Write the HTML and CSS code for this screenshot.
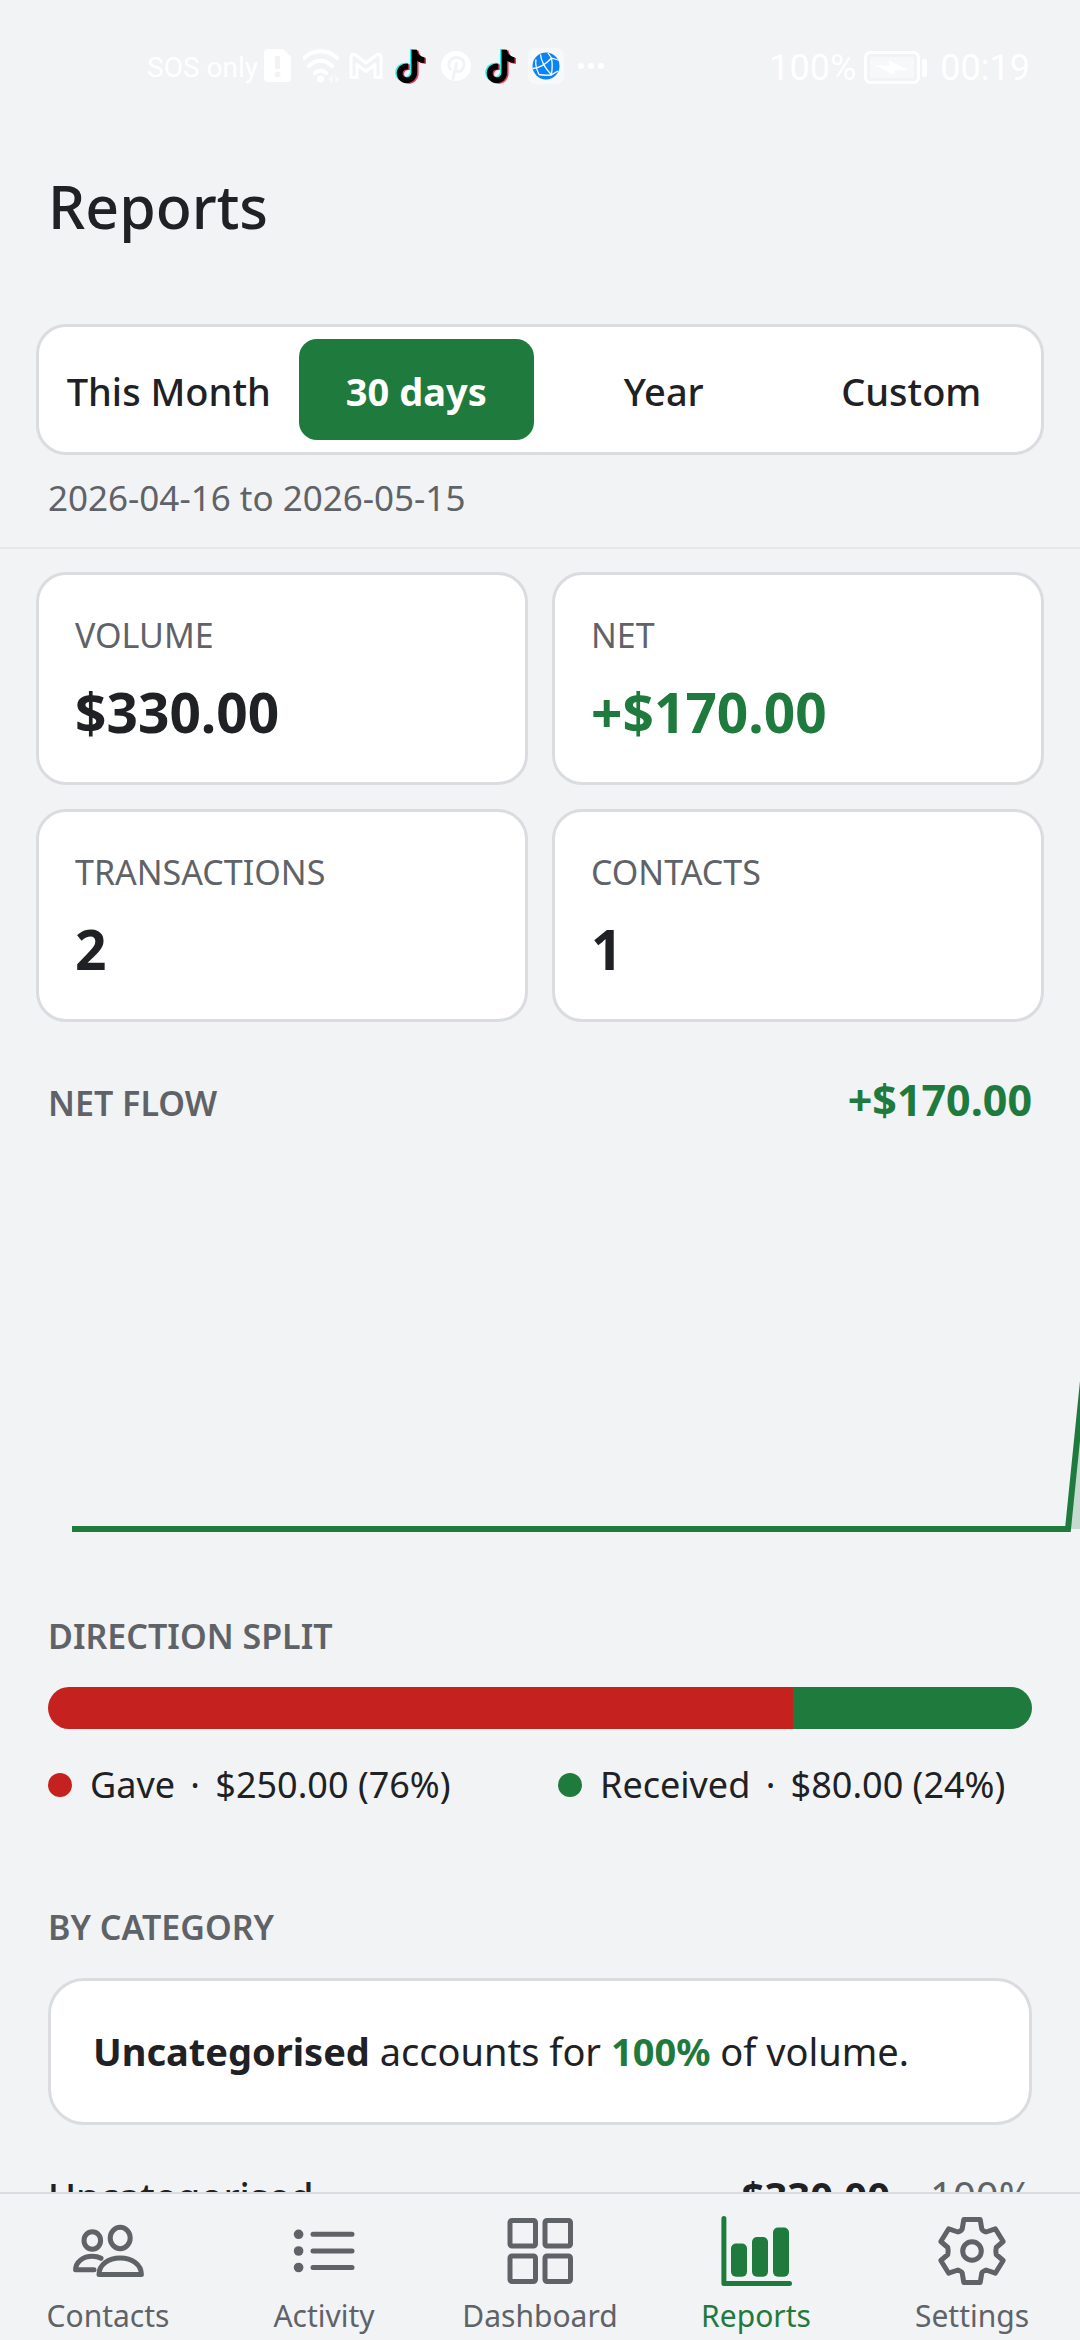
FILE: index.html
```html
<!DOCTYPE html>
<html lang="en">
<head>
<meta charset="utf-8">
<meta name="viewport" content="width=device-width, initial-scale=1">
<title>Reports</title>
<link rel="stylesheet" href="styles.css">
</head>
<body>
<svg class="defs" aria-hidden="true">
  <symbol id="note" viewBox="0 0 36 36">
    <path id="note-shape" d="M17 1h5.600c.4 4.200 3 7 7.400 7.500v5.700c-2.800 0-5.400-.9-7.400-2.300v11.800c0 6.300-4.800 10.600-10.300 10.600S2.300 30 2.300 24.600c0-6 5-10.500 11.500-9.900v6c-3.200-.6-5.700 1.200-5.700 3.800 0 2.400 1.900 4.100 4.300 4.100 2.600 0 4.600-1.700 4.600-4.800z"/>
  </symbol>
</svg>
<div class="app">
  <header class="top">
    <div class="status">
      <div class="status-left">
        <span class="carrier">SOS only</span>
        <svg class="status-icon" viewBox="0 0 36 36"><path fill="#fff" fill-rule="evenodd" d="M10 1h15l8 8v21a4 4 0 0 1-4 4H10a4 4 0 0 1-4-4V5a4 4 0 0 1 4-4zm7 7v13h5V8zm2.500 15.500a3 3 0 1 0 0 6 3 3 0 0 0 0-6z"/></svg>
        <svg class="status-icon" viewBox="0 0 36 36" fill="none" stroke="#fff" stroke-width="4" stroke-linecap="round"><path d="M1 10C10 1 25 1 34 10M6 18c7-7 16-7 23 0M12 25c4-3 8-3 11 0"/><circle cx="17.500" cy="31" r="1.500"/><path stroke-width="1" opacity=".6" d="M29 28l-3 3 3 3zM33 28l3 3-3 3z" fill="#fff"/></svg>
        <svg class="status-icon" viewBox="0 0 36 36"><path fill="none" stroke="#fff" stroke-width="3" stroke-linejoin="round" d="M3 29.500V9c0-2.500 2.500-3.500 4.500-2L18 15l10.500-8C30.500 5.500 33 6.500 33 9v20.500h-6V16.500L18 23.500l-9-7v13z"/></svg>
        <svg class="status-icon" viewBox="0 0 36 36"><use href="#note-shape" fill="#25f4ee"/><use href="#note-shape" x="3" y="1.500" fill="#fe2c55"/><use href="#note-shape" x="1.500" y=".8" fill="#000"/></svg>
        <svg class="status-icon" viewBox="0 0 36 36"><circle cx="18" cy="18" r="15" fill="#fff"/><path fill="none" stroke="#f1f3f5" stroke-width="3" stroke-linecap="round" d="M12.500 21c-4-5 0-11.500 6-11.500 5 0 8 3 7.500 7.500-.5 5-4 7-6.500 6.500-1.500-.3-2.500-1.500-2.500-1.500M18.500 15.500l-3.500 15"/></svg>
        <svg class="status-icon" viewBox="0 0 36 36"><use href="#note-shape" fill="#25f4ee"/><use href="#note-shape" x="3" y="1.500" fill="#fe2c55"/><use href="#note-shape" x="1.500" y=".8" fill="#000"/></svg>
        <svg class="status-icon" viewBox="0 0 36 36"><rect width="36" height="36" rx="7" fill="#f8f8f8"/><circle cx="18" cy="18" r="13.500" fill="#0a84f5"/><path fill="none" stroke="#fff" stroke-width="1.300" d="M12.500 6.500C13 14 17 20 23.500 27M5 20.500C11 20 18 16 23.500 10M23.500 10c1 6 1 12-.5 17.500M8 11.500c-1 5 0 9 3 15M11 26.500c4 .8 8 1 12 .5l7-4M20 5l3.500 5 6.500 2"/></svg>
        <svg class="status-icon" viewBox="0 0 36 36" fill="#fff"><circle cx="8" cy="18" r="3"/><circle cx="18" cy="18" r="3"/><circle cx="28" cy="18" r="3"/></svg>
      </div>
      <div class="status-right">
        <span>100%</span>
        <svg class="battery" viewBox="0 0 64 34"><rect x="1.500" y="1.500" width="53" height="30" rx="5" fill="none" stroke="#fff" stroke-width="3"/><rect x="6" y="6" width="44" height="21" rx="2" fill="#fff" opacity=".4"/><path fill="#fff" d="M11 14l14 1V9l19 10-14 .5V24z"/><rect x="58" y="8" width="5" height="18" rx="2" fill="#fff"/></svg>
        <span>00:19</span>
      </div>
    </div>
    <h1 class="title">Reports</h1>
    <div class="segments">
      <button class="segment" type="button">This Month</button>
      <button class="segment segment-active" type="button" aria-pressed="true">30 days</button>
      <button class="segment" type="button">Year</button>
      <button class="segment" type="button">Custom</button>
    </div>
    <p class="range">2026-04-16 to 2026-05-15</p>
  </header>

  <main class="content">
    <section class="stats">
      <div class="stat"><h2 class="stat-label">VOLUME</h2><p class="stat-value">$330.00</p></div>
      <div class="stat"><h2 class="stat-label">NET</h2><p class="stat-value positive">+$170.00</p></div>
      <div class="stat"><h2 class="stat-label">TRANSACTIONS</h2><p class="stat-value">2</p></div>
      <div class="stat"><h2 class="stat-label">CONTACTS</h2><p class="stat-value">1</p></div>
    </section>

    <section class="flow">
      <div class="flow-head">
        <h2 class="section-title">NET FLOW</h2>
        <p class="flow-total positive">+$170.00</p>
      </div>
      <svg class="chart" viewBox="0 0 1080 420" preserveAspectRatio="none" role="img" aria-label="Net flow">
        <path class="chart-area" d="M72 377H1068L1104 22V377z"/>
        <path class="chart-line" d="M72 377H1068L1104 22"/>
      </svg>
    </section>

    <section class="split">
      <h2 class="section-title">DIRECTION SPLIT</h2>
      <div class="split-bar">
        <div class="split-gave" style="width:75.76%"></div>
        <div class="split-received"></div>
      </div>
      <ul class="legend">
        <li class="legend-item"><span class="dot dot-gave"></span>Gave&thinsp; ·&thinsp; $250.00 (76%)</li>
        <li class="legend-item"><span class="dot dot-received"></span>Received&thinsp; ·&thinsp; $80.00 (24%)</li>
      </ul>
    </section>

    <section class="categories">
      <h2 class="section-title">BY CATEGORY</h2>
      <p class="insight"><b>Uncategorised</b> accounts for <b class="positive">100%</b> of volume.</p>
      <div class="category">
        <span class="category-name">Uncategorised</span>
        <b class="category-total">$330.00</b>
        <span class="category-share">100%</span>
      </div>
    </section>
  </main>

  <nav class="tabs">
    <a class="tab" href="#contacts">
      <svg class="tab-icon" viewBox="0 0 72 72"><ellipse cx="20.300" cy="25.500" rx="8.300" ry="8.700"/><ellipse cx="48.200" cy="23" rx="10" ry="10.700"/><path d="M27 59.500C27 49.500 36.500 43 48.200 43S69.400 49.500 69.400 59.500z"/><path d="M29 43.300C26.500 41.900 23.500 41.200 20.300 41.200 11 41.200 3.600 47 3.600 54.800H22"/></svg>
      Contacts
    </a>
    <a class="tab" href="#activity">
      <svg class="tab-icon" viewBox="0 0 72 72"><path d="M25 19.300H64M25 36H64M25 52.500H64"/><g class="solid"><circle cx="10.600" cy="19.300" r="4.800"/><circle cx="10.600" cy="36" r="4.800"/><circle cx="10.600" cy="52.500" r="4.800"/></g></svg>
      Activity
    </a>
    <a class="tab" href="#dashboard">
      <svg class="tab-icon" viewBox="0 0 72 72"><rect x="6" y="5.500" width="25.500" height="25.500" rx="2"/><rect x="41" y="5.500" width="25.500" height="25.500" rx="2"/><rect x="6" y="41" width="25.500" height="25.500" rx="2"/><rect x="41" y="41" width="25.500" height="25.500" rx="2"/></svg>
      Dashboard
    </a>
    <a class="tab tab-active" href="#reports" aria-current="page">
      <svg class="tab-icon" viewBox="0 0 72 72"><path d="M3.900 3.400V68.600H69.500"/><g class="solid"><rect x="11" y="28.500" width="16" height="33.200" rx="5"/><rect x="32" y="22" width="16" height="39.700" rx="5"/><rect x="53" y="12.500" width="16" height="49.200" rx="5"/></g></svg>
      Reports
    </a>
    <a class="tab" href="#settings">
      <svg class="tab-icon" viewBox="0 0 72 72"><circle cx="36" cy="36" r="9.300"/><path d="M27.800 4.500H44.200L45.800 14Q46.500 15.700 50 17L59.300 13.800 67.200 26.500 60.200 32.500Q59.500 36 60.200 39.500L67.200 45.500 59.300 58.200 50 55Q46.500 56.300 45.800 58L44.200 67.500H27.800L26.200 58Q25.500 56.300 22 55L12.700 58.200 4.800 45.500 11.800 39.500Q12.500 36 11.800 32.500L4.800 26.500 12.700 13.800 22 17Q25.500 15.700 26.200 14z"/></svg>
      Settings
    </a>
  </nav>
</div>
</body>
</html>
```

FILE: styles.css
```css
:root {
  --bg: #f1f3f5;
  --surface: #fff;
  --line: #dadce0;
  --text: #202124;
  --muted: #5f6368;
  --green: #1f7a3d;
  --red: #c5221f;
}

* { box-sizing: border-box; margin: 0; padding: 0; }

body {
  background: var(--bg);
  color: var(--text);
  font-family: "Noto Sans", Roboto, sans-serif;
}

.defs { display: none; }

.app { display: flex; flex-direction: column; height: 100vh; }

.top { border-bottom: 2px solid #e6e8ea; padding: 0 36px 24px; }

/* Status bar */
.status {
  display: flex;
  justify-content: space-between;
  align-items: center;
  height: 132px;
  padding: 0 14px 0 111px;
  color: #fff;
  font-family: Roboto, sans-serif;
}
.status-left { display: flex; align-items: center; gap: 9px; }
.carrier { width: 102px; padding-top: 2px; font-size: 28px; white-space: nowrap; }
.status-icon { width: 36px; height: 36px; }
.status-right { display: flex; align-items: center; gap: 8px; padding-top: 3px; font-size: 36px; }
.battery { width: 64px; height: 34px; margin-right: 4px; }

.title {
  padding: 0 12px;
  font-size: 59px;
  font-weight: 500;
  line-height: 84px;
  margin: 32px 0 76px;
}

.segments {
  display: grid;
  grid-template-columns: repeat(4, 1fr);
  gap: 12px;
  padding: 12px;
  background: var(--surface);
  border: 3px solid var(--line);
  border-radius: 30px;
}
.segment {
  height: 101px;
  padding-top: 3px;
  border: 0;
  border-radius: 18px;
  background: none;
  color: var(--text);
  font: 500 38px/54px "Noto Sans", Roboto, sans-serif;
  white-space: nowrap;
}
.segment-active { background: var(--green); color: #fff; font-weight: 700; }

.range { margin-top: 18px; padding: 0 12px; color: var(--muted); font-size: 35px; line-height: 50px; }

/* Scrolling body */
.content { flex: 1; min-height: 0; overflow: hidden auto; scrollbar-width: none; padding-top: 23px; }

.stats { display: grid; grid-template-columns: 1fr 1fr; gap: 24px; padding: 0 36px; }
.stat {
  padding: 36px 36px 32px;
  background: var(--surface);
  border: 3px solid var(--line);
  border-radius: 30px;
}
.stat-label { color: var(--muted); font-size: 34px; font-weight: 400; line-height: 48px; }
.stat-value { margin-top: 14px; font-size: 55px; font-weight: 700; line-height: 77px; }
.positive { color: var(--green); }

.section-title { color: var(--muted); font-size: 34px; font-weight: 600; line-height: 48px; }

.flow-head { display: flex; justify-content: space-between; align-items: baseline; padding: 48px 48px 0; }
.flow-total { font-size: 43px; font-weight: 700; line-height: 60px; }
.chart { display: block; width: 100%; height: 420px; margin-top: 22px; }
.chart-line { fill: none; stroke: var(--green); stroke-width: 6; }
.chart-area { fill: var(--green); opacity: .2; }

.split { padding: 40px 48px 0; }
.split-bar { display: flex; height: 42px; margin-top: 27px; border-radius: 21px; overflow: hidden; }
.split-gave { background: var(--red); }
.split-received { flex: 1; background: var(--green); }
.legend { display: grid; grid-template-columns: 1fr 1fr; gap: 36px; margin-top: 30px; list-style: none; }
.legend-item { display: flex; align-items: center; gap: 18px; font-size: 36px; line-height: 52px; white-space: nowrap; }
.dot { width: 24px; height: 24px; border-radius: 50%; }
.dot-gave { background: var(--red); }
.dot-received { background: var(--green); }

.categories { padding: 92px 48px 0; }
.insight {
  margin-top: 27px;
  padding: 42px;
  background: var(--surface);
  border: 3px solid var(--line);
  border-radius: 36px;
  font-size: 38px;
  line-height: 57px;
}
.category { display: flex; align-items: baseline; gap: 40px; margin-top: 42px; font-size: 40px; line-height: 57px; }
.category-name { flex: 1; font-size: 38px; font-weight: 500; }
.category-share { color: var(--muted); }

/* Bottom navigation */
.tabs { display: flex; border-top: 2px solid var(--line); background: var(--bg); }
.tab {
  flex: 1;
  display: flex;
  flex-direction: column;
  align-items: center;
  gap: 8px;
  height: 146px;
  padding-top: 21px;
  color: var(--muted);
  font-size: 30px;
  line-height: 42px;
  text-decoration: none;
}
.tab-active { color: var(--green); }
.tab-icon {
  width: 72px;
  height: 72px;
  fill: none;
  stroke: currentColor;
  stroke-width: 5;
  stroke-linecap: round;
  stroke-linejoin: round;
}
.solid { fill: currentColor; stroke: none; }
```
